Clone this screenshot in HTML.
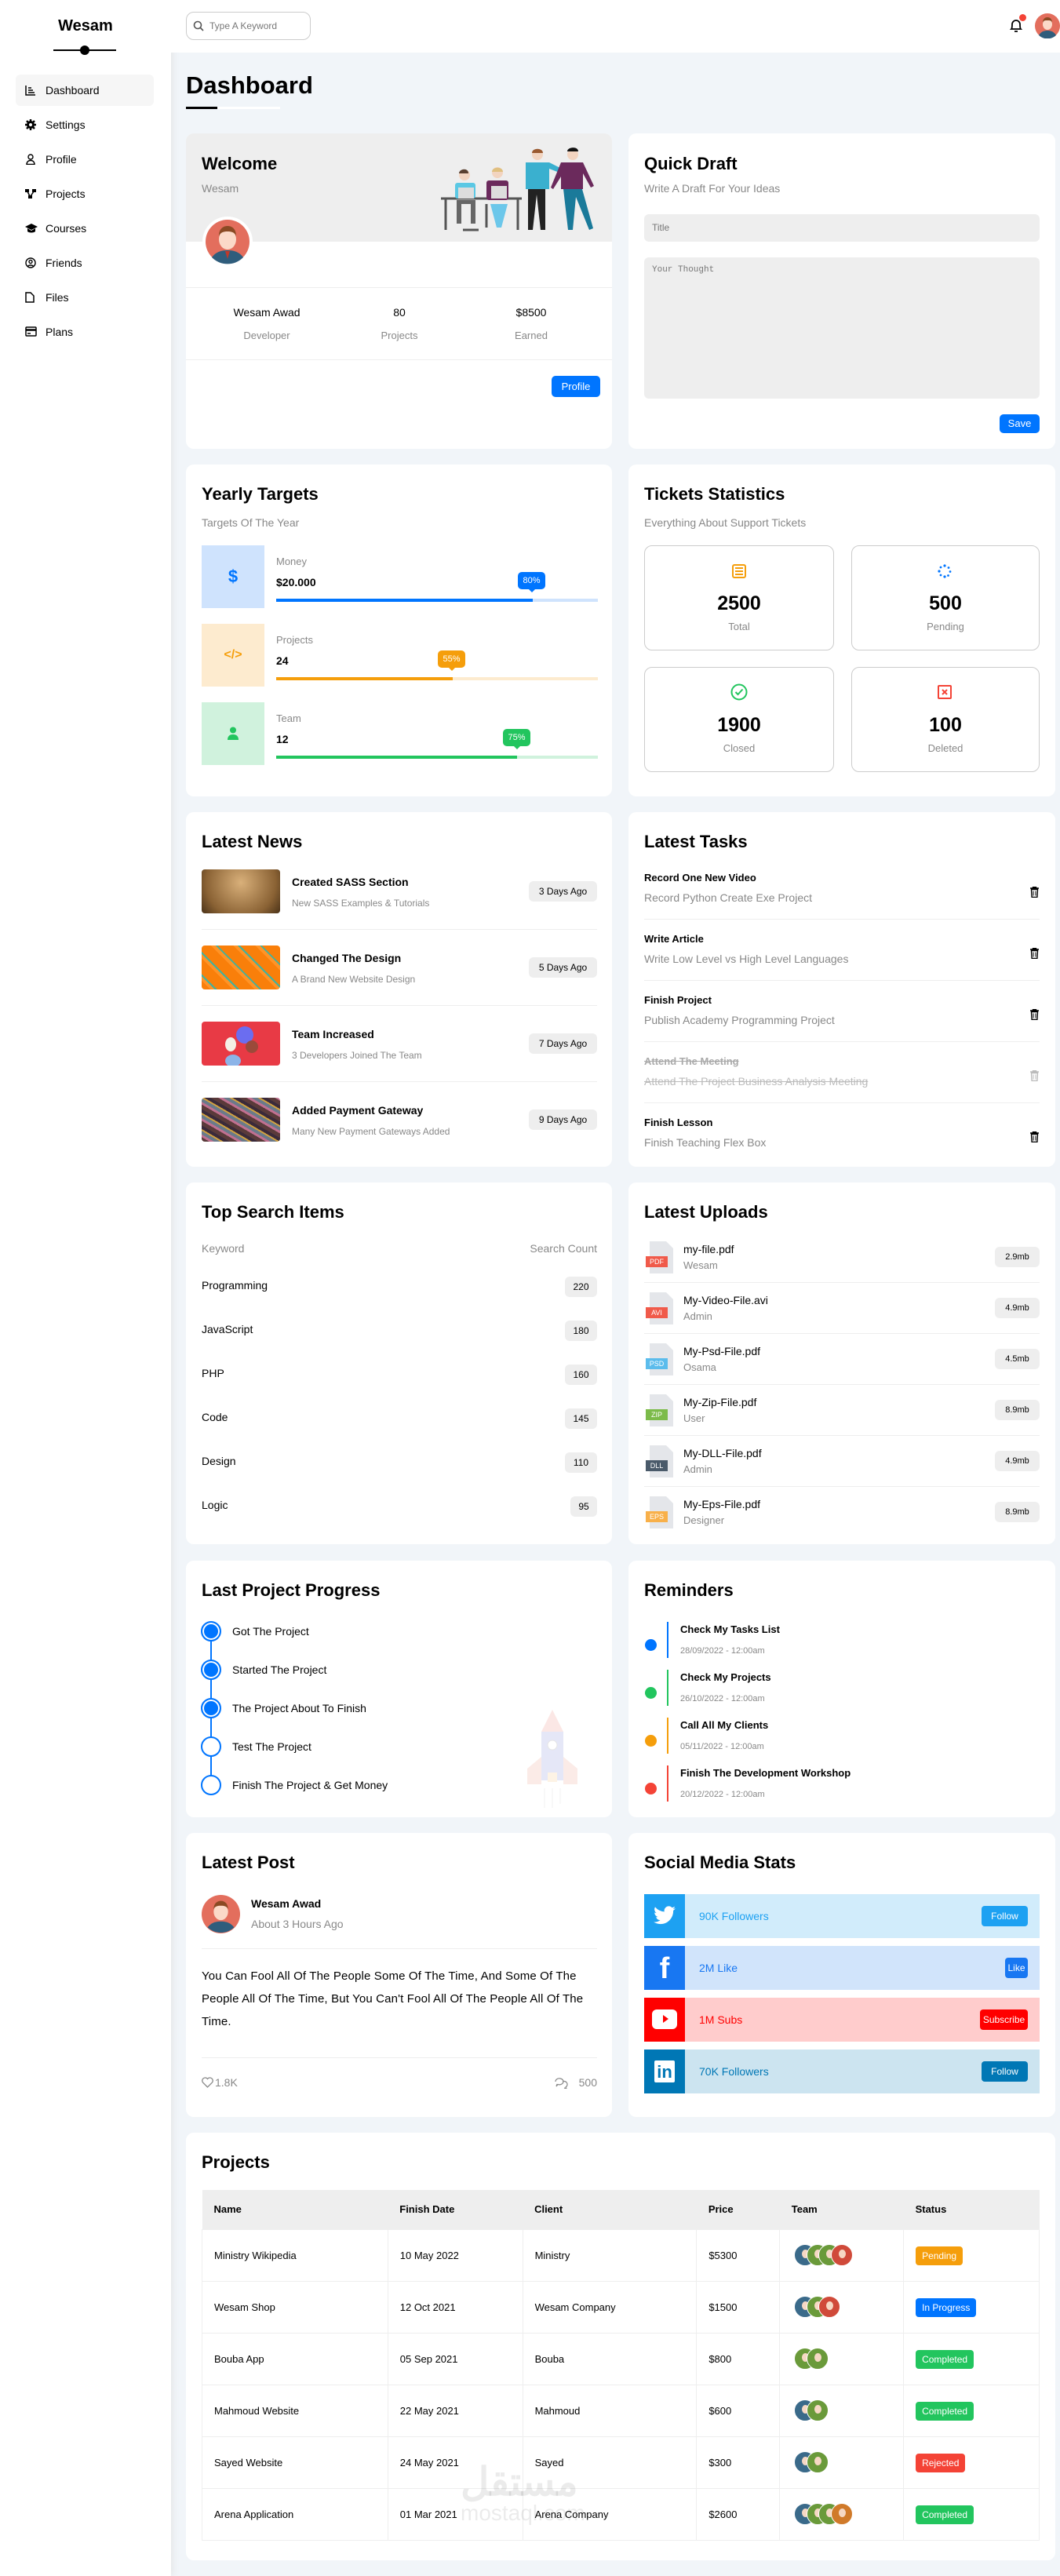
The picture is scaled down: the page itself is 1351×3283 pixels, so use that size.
<!DOCTYPE html>
<html><head><meta charset="utf-8">
<style>
*{box-sizing:border-box;margin:0;padding:0}
body{width:1351px;height:3283px;background:#f1f5f9;font-family:"Liberation Sans","Noto Sans CJK SC",sans-serif;color:#000;position:relative;overflow:hidden;font-size:14px}
.a{position:absolute}
.card{position:absolute;background:#fff;border-radius:10px}
.h{position:absolute;left:20px;top:24px;font-size:22px;font-weight:bold;line-height:28px;white-space:nowrap}
.sub{position:absolute;left:20px;top:64px;font-size:14px;color:#888;line-height:20px;white-space:nowrap}
.g{color:#888}
.t{white-space:nowrap;line-height:20px}
.badge{position:absolute;background:#eee;border-radius:6px;font-size:12px;text-align:center;line-height:26px;height:26px}
.nav{position:absolute;left:20px;width:176px;height:40px;border-radius:6px;font-size:14px;line-height:40px;padding-left:38px}
.nav svg{position:absolute;left:12px;top:13px}
.sep{position:absolute;height:1px;background:#eee}
td,th{border:1px solid #eee}
.av{display:inline-block;width:28px;height:28px;border-radius:50%;border:1px solid #fff;vertical-align:middle;margin-left:-12.5px;position:relative}
.av:first-child{margin-left:0}
.av::after{content:"";position:absolute;left:9px;top:6px;width:9px;height:11px;border-radius:50%;background:#f6d8c4}
.b{background:#3a6a8a}.gr{background:#6a9a3a}.r{background:#d04a3a}.o{background:#d07a2a}
</style></head><body>

<!-- sidebar -->
<div class="a" style="left:0;top:0;width:218px;height:3283px;background:#fff;box-shadow:0 0 10px #ddd"></div>
<div class="a t" style="left:0;width:218px;top:20px;text-align:center;font-weight:bold;font-size:20px;line-height:26px">Wesam</div>
<div class="a" style="left:68px;top:63px;width:80px;height:2px;background:#000"></div>
<div class="a" style="left:102px;top:58px;width:12px;height:12px;border-radius:50%;background:#000"></div>

<div class="nav" style="top:95px;background:#f6f6f6"><svg width="14" height="14" viewBox="0 0 14 14" fill="none" stroke="#000" stroke-width="1.5"><path d="M1 1v12h12M4 4h4M4 7h6M4 10h8"/></svg>Dashboard</div>
<div class="nav" style="top:139px"><svg width="14" height="14" viewBox="0 0 14 14"><circle cx="7" cy="7" r="5" fill="#000"/><path d="M7 0v14M0 7h14M2 2l10 10M12 2L2 12" stroke="#000" stroke-width="2.5"/><circle cx="7" cy="7" r="2" fill="#fff"/></svg>Settings</div>
<div class="nav" style="top:183px"><svg width="14" height="14" viewBox="0 0 14 14" fill="none" stroke="#000" stroke-width="1.4"><circle cx="7" cy="4" r="3"/><path d="M2 13.5c0-3 2-5 5-5s5 2 5 5z"/></svg>Profile</div>
<div class="nav" style="top:227px"><svg width="14" height="14" viewBox="0 0 14 14"><rect x="0" y="1" width="5" height="4" fill="#000"/><rect x="9" y="1" width="5" height="4" fill="#000"/><rect x="4" y="9" width="5" height="4" fill="#000"/><path d="M3 4l3 6M11 4l-4 6" stroke="#000" stroke-width="1.5"/></svg>Projects</div>
<div class="nav" style="top:271px"><svg width="16" height="14" viewBox="0 0 16 14"><path d="M8 1L0 5l8 4 8-4z" fill="#000"/><path d="M3 7v4c2 2 8 2 10 0V7L8 10z" fill="#000"/></svg>Courses</div>
<div class="nav" style="top:315px"><svg width="14" height="14" viewBox="0 0 14 14" fill="none" stroke="#000" stroke-width="1.4"><circle cx="7" cy="7" r="6"/><circle cx="7" cy="5.5" r="2"/><path d="M3.5 11.5c1-2 6-2 7 0"/></svg>Friends</div>
<div class="nav" style="top:359px"><svg width="12" height="14" viewBox="0 0 12 14" fill="none" stroke="#000" stroke-width="1.5"><path d="M1 1h6l4 4v8H1z"/></svg>Files</div>
<div class="nav" style="top:403px"><svg width="15" height="13" viewBox="0 0 15 13" fill="none" stroke="#000" stroke-width="1.5"><rect x="1" y="1" width="13" height="11" rx="1"/><path d="M1 4.5h13" stroke-width="2.5"/><path d="M3 9h4"/></svg>Plans</div>

<!-- header -->
<div class="a" style="left:218px;top:0;width:1133px;height:67px;background:#fff"></div>
<div class="a" style="left:237px;top:15px;width:159px;height:36px;border:1px solid #ccc;border-radius:10px"></div>
<svg class="a" style="left:246px;top:26px" width="14" height="14" viewBox="0 0 14 14" fill="none" stroke="#555" stroke-width="1.6"><circle cx="6" cy="6" r="4.5"/><path d="M9.5 9.5L13 13"/></svg>
<div class="a t" style="left:267px;top:23px;font-size:12px;color:#777">Type A Keyword</div>
<svg class="a" style="left:1286px;top:22px" width="18" height="20" viewBox="0 0 18 20" fill="none" stroke="#000" stroke-width="1.8"><path d="M3 15c1-1 1-3 1-6a5 5 0 0 1 10 0c0 3 0 5 1 6zM7 18h4"/></svg>
<div class="a" style="left:1299px;top:18px;width:9px;height:9px;border-radius:50%;background:#f44336"></div>
<svg class="a" style="left:1319px;top:17px" width="32" height="32" viewBox="0 0 32 32"><circle cx="16" cy="16" r="16" fill="#e36e5d"/><path d="M5 28c3-5 7-6 11-6s8 1 11 6a16 16 0 0 1-22 0z" fill="#2f5d7c"/><ellipse cx="16" cy="14" rx="6" ry="7" fill="#fbd9c8"/><path d="M10 12c0-5 3-7 6-7s6 2 6 7c-1-3-3-3-6-3s-5 0-6 3z" fill="#8b4a24"/></svg>

<!-- title -->
<div class="a t" style="left:237px;top:90px;font-size:31px;font-weight:bold;line-height:38px">Dashboard</div>
<div class="a" style="left:237px;top:136px;width:120px;height:3px;background:#fff"></div>
<div class="a" style="left:237px;top:136px;width:40px;height:3px;background:#000"></div>

<!-- Welcome -->
<div class="card" style="left:237px;top:170px;width:543px;height:402px;overflow:hidden">
 <div class="a" style="left:0;top:0;width:543px;height:138px;background:#eee"></div>
 <div class="h" style="top:25px">Welcome</div>
 <div class="sub" style="top:60px">Wesam</div>
 <svg class="a" style="left:303px;top:5px" width="240" height="135" viewBox="0 0 240 135">
  <path d="M22 78h103M28 78v40M120 78v40M50 118h20M80 85v30M95 85v30" stroke="#555" stroke-width="3" fill="none"/>
  <circle cx="52" cy="48" r="7" fill="#f2d4c0"/><path d="M45 46c0-6 12-8 12 0z" fill="#5a4030"/>
  <rect x="40" y="58" width="26" height="20" rx="3" fill="#5bc8e4"/><rect x="44" y="64" width="20" height="14" fill="#ddd"/>
  <path d="M42 80h24v30h-6v-25h-12v25h-6z" fill="#666"/>
  <circle cx="94" cy="45" r="7" fill="#f2d4c0"/><path d="M87 44c0-7 14-7 14 0z" fill="#e0c080"/>
  <rect x="80" y="55" width="28" height="25" rx="3" fill="#6b2a5c"/><rect x="86" y="62" width="20" height="16" fill="#ddd"/>
  <path d="M85 85h22l-8 30h-6z" fill="#6cc7ea"/>
  <circle cx="145" cy="22" r="7" fill="#f2d4c0"/><path d="M138 20c0-7 14-7 14 0z" fill="#9a5a30"/>
  <path d="M130 32h30l20 10-2 5-18-7v26h-30z" fill="#3ab0cf"/>
  <path d="M133 66h22v52h-6l-5-45-5 45h-6z" fill="#222"/>
  <circle cx="190" cy="22" r="7" fill="#f2d4c0"/><path d="M183 18c0-6 14-7 14 0z" fill="#111"/>
  <path d="M175 32h28l14 30-4 2-10-18v20h-28v-16l-10 16-3-2z" fill="#6b2a5c"/>
  <path d="M178 66h24l14 50-5 2-17-42-4 42h-6z" fill="#1a7a9a"/>
 </svg>
 <svg class="a" style="left:21px;top:106px" width="64" height="64" viewBox="0 0 64 64"><circle cx="32" cy="32" r="32" fill="#fff"/><circle cx="32" cy="32" r="28" fill="#e36e5d"/><path d="M12 52c5-7 12-9 20-9s15 2 20 9a28 28 0 0 1-40 0z" fill="#2f5d7c"/><path d="M29 44h6l-3 10z" fill="#c0392b"/><ellipse cx="32" cy="29" rx="11" ry="13" fill="#fbd9c8"/><path d="M21 25c0-9 5-13 11-13s11 4 11 13c-2-5-6-6-11-6s-9 1-11 6z" fill="#8b4a24"/></svg>
 <div class="sep" style="left:0;top:196px;width:543px"></div>
 <div class="a t" style="left:33px;width:140px;top:218px;text-align:center">Wesam Awad</div>
 <div class="a t g" style="left:33px;width:140px;top:248px;text-align:center;font-size:13px">Developer</div>
 <div class="a t" style="left:202px;width:140px;top:218px;text-align:center">80</div>
 <div class="a t g" style="left:202px;width:140px;top:248px;text-align:center;font-size:13px">Projects</div>
 <div class="a t" style="left:370px;width:140px;top:218px;text-align:center">$8500</div>
 <div class="a t g" style="left:370px;width:140px;top:248px;text-align:center;font-size:13px">Earned</div>
 <div class="sep" style="left:0;top:288px;width:543px"></div>
 <div class="a" style="left:466px;top:309px;width:62px;height:27px;background:#0075ff;border-radius:5px;color:#fff;font-size:13px;text-align:center;line-height:27px">Profile</div>
</div>

<!-- Quick Draft -->
<div class="card" style="left:801px;top:170px;width:544px;height:402px">
 <div class="h" style="top:25px">Quick Draft</div>
 <div class="sub" style="top:60px">Write A Draft For Your Ideas</div>
 <div class="a" style="left:20px;top:103px;width:504px;height:35px;background:#eee;border-radius:6px;font-size:12px;color:#777;padding:10px 10px;line-height:15px">Title</div>
 <div class="a" style="left:20px;top:158px;width:504px;height:180px;background:#eee;border-radius:6px;font-size:11px;color:#777;padding:10px;font-family:'Liberation Mono',monospace">Your Thought</div>
 <div class="a" style="left:473px;top:358px;width:51px;height:24px;background:#0075ff;border-radius:5px;color:#fff;font-size:13px;text-align:center;line-height:24px">Save</div>
</div>

<!-- Yearly Targets -->
<div class="card" style="left:237px;top:592px;width:543px;height:423px">
 <div class="h">Yearly Targets</div>
 <div class="sub">Targets Of The Year</div>
 <div class="a" style="left:20px;top:103px;width:80px;height:80px;background:#cfe3fd"></div>
 <div class="a" style="left:20px;top:130px;width:80px;text-align:center;color:#0075ff;font-size:22px;font-weight:bold;line-height:26px">$</div>
 <div class="a t g" style="left:115px;top:114px;font-size:13px">Money</div>
 <div class="a t" style="left:115px;top:140px;font-weight:bold">$20.000</div>
 <div class="a" style="left:115px;top:171px;width:410px;height:4px;background:#cfe3fd"></div>
 <div class="a" style="left:115px;top:171px;width:327px;height:4px;background:#0075ff"></div>
 <div class="a" style="left:423px;top:137px;width:35px;height:22px;background:#0075ff;border-radius:5px;color:#fff;font-size:11px;text-align:center;line-height:22px">80%</div>
 <div class="a" style="left:436px;top:158px;border:5px solid transparent;border-top-color:#0075ff"></div>
 <div class="a" style="left:20px;top:203px;width:80px;height:80px;background:#fdebcf"></div>
 <div class="a" style="left:20px;top:230px;width:80px;text-align:center;color:#f59e0b;font-size:16px;font-weight:bold;line-height:26px">&lt;/&gt;</div>
 <div class="a t g" style="left:115px;top:214px;font-size:13px">Projects</div>
 <div class="a t" style="left:115px;top:240px;font-weight:bold">24</div>
 <div class="a" style="left:115px;top:271px;width:410px;height:4px;background:#fdebcf"></div>
 <div class="a" style="left:115px;top:271px;width:225px;height:4px;background:#f59e0b"></div>
 <div class="a" style="left:321px;top:237px;width:35px;height:22px;background:#f59e0b;border-radius:5px;color:#fff;font-size:11px;text-align:center;line-height:22px">55%</div>
 <div class="a" style="left:334px;top:258px;border:5px solid transparent;border-top-color:#f59e0b"></div>
 <div class="a" style="left:20px;top:303px;width:80px;height:80px;background:#d0f2dd"></div>
 <svg class="a" style="left:52px;top:334px" width="16" height="18" viewBox="0 0 16 18"><circle cx="8" cy="4.5" r="4" fill="#22c55e"/><path d="M1 17c0-5 3-7 7-7s7 2 7 7z" fill="#22c55e"/></svg>
 <div class="a t g" style="left:115px;top:314px;font-size:13px">Team</div>
 <div class="a t" style="left:115px;top:340px;font-weight:bold">12</div>
 <div class="a" style="left:115px;top:371px;width:410px;height:4px;background:#d0f2dd"></div>
 <div class="a" style="left:115px;top:371px;width:307px;height:4px;background:#22c55e"></div>
 <div class="a" style="left:404px;top:337px;width:35px;height:22px;background:#22c55e;border-radius:5px;color:#fff;font-size:11px;text-align:center;line-height:22px">75%</div>
 <div class="a" style="left:417px;top:358px;border:5px solid transparent;border-top-color:#22c55e"></div>
</div>

<!-- Tickets -->
<div class="card" style="left:801px;top:592px;width:544px;height:423px">
 <div class="h">Tickets Statistics</div>
 <div class="sub">Everything About Support Tickets</div>
 <div class="a" style="left:20px;top:103px;width:242px;height:134px;border:1px solid #ccc;border-radius:10px"></div>
 <div class="a" style="left:284px;top:103px;width:240px;height:134px;border:1px solid #ccc;border-radius:10px"></div>
 <div class="a" style="left:20px;top:258px;width:242px;height:134px;border:1px solid #ccc;border-radius:10px"></div>
 <div class="a" style="left:284px;top:258px;width:240px;height:134px;border:1px solid #ccc;border-radius:10px"></div>
 <svg class="a" style="left:132px;top:127px" width="18" height="18" viewBox="0 0 18 18" fill="none" stroke="#f59e0b" stroke-width="2"><rect x="1" y="1" width="16" height="16" rx="2"/><path d="M4 5h10M4 9h10M4 13h10"/></svg>
 <svg class="a" style="left:394px;top:127px" width="18" height="18" viewBox="0 0 18 18" fill="#0075ff"><circle cx="9" cy="2" r="1.6"/><circle cx="14" cy="4.5" r="1.4"/><circle cx="16" cy="9.5" r="1.4"/><circle cx="13.5" cy="14.5" r="1.4"/><circle cx="9" cy="16" r="1.6"/><circle cx="4" cy="14" r="1.4"/><circle cx="2" cy="9" r="1.6"/><circle cx="4" cy="4" r="1.4"/></svg>
 <div class="a t" style="left:20px;width:242px;top:162px;text-align:center;font-size:25px;font-weight:bold;line-height:30px">2500</div>
 <div class="a t g" style="left:20px;width:242px;top:197px;text-align:center;font-size:13px">Total</div>
 <div class="a t" style="left:284px;width:240px;top:162px;text-align:center;font-size:25px;font-weight:bold;line-height:30px">500</div>
 <div class="a t g" style="left:284px;width:240px;top:197px;text-align:center;font-size:13px">Pending</div>
 <svg class="a" style="left:130px;top:279px" width="22" height="22" viewBox="0 0 22 22" fill="none" stroke="#22c55e" stroke-width="2"><circle cx="11" cy="11" r="9.5"/><path d="M6.5 11l3 3 6-6.5"/></svg>
 <svg class="a" style="left:394px;top:281px" width="18" height="18" viewBox="0 0 18 18" fill="none" stroke="#f44336" stroke-width="2"><rect x="1" y="1" width="16" height="16" rx="1"/><path d="M6 6l6 6M12 6l-6 6"/></svg>
 <div class="a t" style="left:20px;width:242px;top:317px;text-align:center;font-size:25px;font-weight:bold;line-height:30px">1900</div>
 <div class="a t g" style="left:20px;width:242px;top:352px;text-align:center;font-size:13px">Closed</div>
 <div class="a t" style="left:284px;width:240px;top:317px;text-align:center;font-size:25px;font-weight:bold;line-height:30px">100</div>
 <div class="a t g" style="left:284px;width:240px;top:352px;text-align:center;font-size:13px">Deleted</div>
</div>

<!-- Latest News -->
<div class="card" style="left:237px;top:1035px;width:543px;height:452px">
 <div class="h" style="top:24px">Latest News</div>
 <div class="a" style="left:20px;top:73px;width:100px;height:56px;border-radius:4px;background:radial-gradient(circle at 50% 30%,#d9b07a,#8a6234 70%,#4a3218)"></div>
 <div class="a t" style="left:135px;top:79px;font-weight:bold">Created SASS Section</div>
 <div class="a t g" style="left:135px;top:106px;font-size:12px">New SASS Examples &amp; Tutorials</div>
 <div class="badge" style="left:437px;top:88px;width:87px">3 Days Ago</div>
 <div class="sep" style="left:20px;top:149px;width:504px"></div>
 <div class="a" style="left:20px;top:170px;width:100px;height:56px;border-radius:4px;background:repeating-linear-gradient(45deg,#f97f0a 0 8px,#ff9326 8px 12px,#3fb2a0 12px 14px,#f97f0a 14px 20px)"></div>
 <div class="a t" style="left:135px;top:176px;font-weight:bold">Changed The Design</div>
 <div class="a t g" style="left:135px;top:203px;font-size:12px">A Brand New Website Design</div>
 <div class="badge" style="left:437px;top:185px;width:87px">5 Days Ago</div>
 <div class="sep" style="left:20px;top:246px;width:504px"></div>
 <div class="a" style="left:20px;top:267px;width:100px;height:56px;border-radius:4px;background:#e83a45;overflow:hidden"><div class="a" style="left:44px;top:6px;width:22px;height:22px;border-radius:50%;background:#6b6df0"></div><div class="a" style="left:30px;top:20px;width:14px;height:18px;border-radius:50%;background:#f4efe6"></div><div class="a" style="left:56px;top:24px;width:16px;height:16px;border-radius:50%;background:#9b4a3a"></div><div class="a" style="left:30px;top:42px;width:20px;height:16px;border-radius:50%;background:#8cb4e8"></div></div>
 <div class="a t" style="left:135px;top:273px;font-weight:bold">Team Increased</div>
 <div class="a t g" style="left:135px;top:300px;font-size:12px">3 Developers Joined The Team</div>
 <div class="badge" style="left:437px;top:282px;width:87px">7 Days Ago</div>
 <div class="sep" style="left:20px;top:343px;width:504px"></div>
 <div class="a" style="left:20px;top:364px;width:100px;height:56px;border-radius:4px;background:repeating-linear-gradient(30deg,#5a3a3a 0 5px,#c07090 5px 8px,#6a7a8a 8px 12px,#d0a040 12px 14px,#3a2a3a 14px 18px)"></div>
 <div class="a t" style="left:135px;top:370px;font-weight:bold">Added Payment Gateway</div>
 <div class="a t g" style="left:135px;top:397px;font-size:12px">Many New Payment Gateways Added</div>
 <div class="badge" style="left:437px;top:379px;width:87px">9 Days Ago</div>
</div>

<!-- Latest Tasks -->
<div class="card" style="left:801px;top:1035px;width:544px;height:452px">
 <div class="h" style="top:24px">Latest Tasks</div>
 <div class="a t" style="left:20px;top:74px;font-size:13px;font-weight:bold">Record One New Video</div>
 <div class="a t g" style="left:20px;top:99px">Record Python Create Exe Project</div>
 <div class="sep" style="left:20px;top:136px;width:504px"></div>
 <div class="a t" style="left:20px;top:152px;font-size:13px;font-weight:bold">Write Article</div>
 <div class="a t g" style="left:20px;top:177px">Write Low Level vs High Level Languages</div>
 <div class="sep" style="left:20px;top:214px;width:504px"></div>
 <div class="a t" style="left:20px;top:230px;font-size:13px;font-weight:bold">Finish Project</div>
 <div class="a t g" style="left:20px;top:255px">Publish Academy Programming Project</div>
 <div class="sep" style="left:20px;top:292px;width:504px"></div>
 <div class="a t" style="left:20px;top:308px;font-size:13px;font-weight:bold;color:#aaa;text-decoration:line-through">Attend The Meeting</div>
 <div class="a t" style="left:20px;top:333px;color:#bbb;text-decoration:line-through">Attend The Project Business Analysis Meeting</div>
 <div class="sep" style="left:20px;top:370px;width:504px"></div>
 <div class="a t" style="left:20px;top:386px;font-size:13px;font-weight:bold">Finish Lesson</div>
 <div class="a t g" style="left:20px;top:411px">Finish Teaching Flex Box</div>
 <svg class="a" style="left:512px;top:95px" width="11" height="14" viewBox="0 0 11 14"><path d="M0 2h11M3.5 2V0.5h4V2M1.5 3.5h8l-0.6 10h-6.8z" fill="none" stroke="#000" stroke-width="1.4"/><path d="M4 5.5v6M7 5.5v6" stroke="#000"/></svg>
 <svg class="a" style="left:512px;top:173px" width="11" height="14" viewBox="0 0 11 14"><path d="M0 2h11M3.5 2V0.5h4V2M1.5 3.5h8l-0.6 10h-6.8z" fill="none" stroke="#000" stroke-width="1.4"/><path d="M4 5.5v6M7 5.5v6" stroke="#000"/></svg>
 <svg class="a" style="left:512px;top:251px" width="11" height="14" viewBox="0 0 11 14"><path d="M0 2h11M3.5 2V0.5h4V2M1.5 3.5h8l-0.6 10h-6.8z" fill="none" stroke="#000" stroke-width="1.4"/><path d="M4 5.5v6M7 5.5v6" stroke="#000"/></svg>
 <svg class="a" style="left:512px;top:329px" width="11" height="14" viewBox="0 0 11 14"><path d="M0 2h11M3.5 2V0.5h4V2M1.5 3.5h8l-0.6 10h-6.8z" fill="none" stroke="#bbb" stroke-width="1.4"/><path d="M4 5.5v6M7 5.5v6" stroke="#bbb"/></svg>
 <svg class="a" style="left:512px;top:407px" width="11" height="14" viewBox="0 0 11 14"><path d="M0 2h11M3.5 2V0.5h4V2M1.5 3.5h8l-0.6 10h-6.8z" fill="none" stroke="#000" stroke-width="1.4"/><path d="M4 5.5v6M7 5.5v6" stroke="#000"/></svg>
</div>

<!-- Top Search -->
<div class="card" style="left:237px;top:1507px;width:543px;height:461px">
 <div class="h" style="top:24px">Top Search Items</div>
 <div class="a t g" style="left:20px;top:74px">Keyword</div>
 <div class="a t g" style="right:19px;top:74px">Search Count</div>
 <div class="a t" style="left:20px;top:121px">Programming</div><div class="badge" style="left:483px;top:120px;width:41px">220</div>
 <div class="a t" style="left:20px;top:177px">JavaScript</div><div class="badge" style="left:483px;top:176px;width:41px">180</div>
 <div class="a t" style="left:20px;top:233px">PHP</div><div class="badge" style="left:483px;top:232px;width:41px">160</div>
 <div class="a t" style="left:20px;top:289px">Code</div><div class="badge" style="left:483px;top:288px;width:41px">145</div>
 <div class="a t" style="left:20px;top:345px">Design</div><div class="badge" style="left:483px;top:344px;width:41px">110</div>
 <div class="a t" style="left:20px;top:401px">Logic</div><div class="badge" style="left:490px;top:400px;width:34px">95</div>
</div>

<!-- Latest Uploads -->
<div class="card" style="left:801px;top:1507px;width:544px;height:461px">
 <div class="h" style="top:24px">Latest Uploads</div>
 <div class="a" style="left:0;top:75px;width:544px">
  <div class="a" style="left:27px;top:0;width:30px;height:41px;background:#e4e6ea;clip-path:polygon(0 0,70% 0,100% 22%,100% 100%,0 100%)"></div><div class="a" style="left:22px;top:19px;width:28px;height:14px;background:#f05a4a;color:#fff;font-size:9px;text-align:center;line-height:14px">PDF</div>
  <div class="a t" style="left:70px;top:0">my-file.pdf</div><div class="a t g" style="left:70px;top:21px;font-size:13px">Wesam</div>
  <div class="badge" style="left:467px;top:7px;width:57px;font-size:11px">2.9mb</div>
  <div class="sep" style="left:20px;top:52px;width:504px"></div>
 </div>
 <div class="a" style="left:0;top:140px;width:544px">
  <div class="a" style="left:27px;top:0;width:30px;height:41px;background:#e4e6ea;clip-path:polygon(0 0,70% 0,100% 22%,100% 100%,0 100%)"></div><div class="a" style="left:22px;top:19px;width:28px;height:14px;background:#f05a4a;color:#fff;font-size:9px;text-align:center;line-height:14px">AVI</div>
  <div class="a t" style="left:70px;top:0">My-Video-File.avi</div><div class="a t g" style="left:70px;top:21px;font-size:13px">Admin</div>
  <div class="badge" style="left:467px;top:7px;width:57px;font-size:11px">4.9mb</div>
  <div class="sep" style="left:20px;top:52px;width:504px"></div>
 </div>
 <div class="a" style="left:0;top:205px;width:544px">
  <div class="a" style="left:27px;top:0;width:30px;height:41px;background:#e4e6ea;clip-path:polygon(0 0,70% 0,100% 22%,100% 100%,0 100%)"></div><div class="a" style="left:22px;top:19px;width:28px;height:14px;background:#5bbcec;color:#fff;font-size:9px;text-align:center;line-height:14px">PSD</div>
  <div class="a t" style="left:70px;top:0">My-Psd-File.pdf</div><div class="a t g" style="left:70px;top:21px;font-size:13px">Osama</div>
  <div class="badge" style="left:467px;top:7px;width:57px;font-size:11px">4.5mb</div>
  <div class="sep" style="left:20px;top:52px;width:504px"></div>
 </div>
 <div class="a" style="left:0;top:270px;width:544px">
  <div class="a" style="left:27px;top:0;width:30px;height:41px;background:#e4e6ea;clip-path:polygon(0 0,70% 0,100% 22%,100% 100%,0 100%)"></div><div class="a" style="left:22px;top:19px;width:28px;height:14px;background:#7cbb4a;color:#fff;font-size:9px;text-align:center;line-height:14px">ZIP</div>
  <div class="a t" style="left:70px;top:0">My-Zip-File.pdf</div><div class="a t g" style="left:70px;top:21px;font-size:13px">User</div>
  <div class="badge" style="left:467px;top:7px;width:57px;font-size:11px">8.9mb</div>
  <div class="sep" style="left:20px;top:52px;width:504px"></div>
 </div>
 <div class="a" style="left:0;top:335px;width:544px">
  <div class="a" style="left:27px;top:0;width:30px;height:41px;background:#e4e6ea;clip-path:polygon(0 0,70% 0,100% 22%,100% 100%,0 100%)"></div><div class="a" style="left:22px;top:19px;width:28px;height:14px;background:#4a5a6a;color:#fff;font-size:9px;text-align:center;line-height:14px">DLL</div>
  <div class="a t" style="left:70px;top:0">My-DLL-File.pdf</div><div class="a t g" style="left:70px;top:21px;font-size:13px">Admin</div>
  <div class="badge" style="left:467px;top:7px;width:57px;font-size:11px">4.9mb</div>
  <div class="sep" style="left:20px;top:52px;width:504px"></div>
 </div>
 <div class="a" style="left:0;top:400px;width:544px">
  <div class="a" style="left:27px;top:0;width:30px;height:41px;background:#e4e6ea;clip-path:polygon(0 0,70% 0,100% 22%,100% 100%,0 100%)"></div><div class="a" style="left:22px;top:19px;width:28px;height:14px;background:#f8b04a;color:#fff;font-size:9px;text-align:center;line-height:14px">EPS</div>
  <div class="a t" style="left:70px;top:0">My-Eps-File.pdf</div><div class="a t g" style="left:70px;top:21px;font-size:13px">Designer</div>
  <div class="badge" style="left:467px;top:7px;width:57px;font-size:11px">8.9mb</div>
 </div>
</div>

<!-- Last Project Progress -->
<div class="card" style="left:237px;top:1989px;width:543px;height:327px;overflow:hidden">
 <div class="h" style="top:24px">Last Project Progress</div>
 <div class="a" style="left:31px;top:90px;width:2px;height:196px;background:#0075ff"></div>
 <div class="a" style="left:19px;top:77px;width:26px;height:26px;border-radius:50%;border:2px solid #0075ff;background:#0075ff;box-shadow:inset 0 0 0 2px #fff"></div>
 <div class="a" style="left:19px;top:126px;width:26px;height:26px;border-radius:50%;border:2px solid #0075ff;background:#0075ff;box-shadow:inset 0 0 0 2px #fff"></div>
 <div class="a" style="left:19px;top:175px;width:26px;height:26px;border-radius:50%;border:2px solid #0075ff;background:#0075ff;box-shadow:inset 0 0 0 2px #fff"></div>
 <div class="a" style="left:19px;top:224px;width:26px;height:26px;border-radius:50%;border:2px solid #0075ff;background:#fff"></div>
 <div class="a" style="left:19px;top:273px;width:26px;height:26px;border-radius:50%;border:2px solid #0075ff;background:#fff"></div>
 <div class="a t" style="left:59px;top:80px">Got The Project</div>
 <div class="a t" style="left:59px;top:129px">Started The Project</div>
 <div class="a t" style="left:59px;top:178px">The Project About To Finish</div>
 <div class="a t" style="left:59px;top:227px">Test The Project</div>
 <div class="a t" style="left:59px;top:276px">Finish The Project &amp; Get Money</div>
 <svg class="a" style="left:425px;top:190px;opacity:.12" width="85" height="125" viewBox="0 0 85 125"><path d="M42 0l14 28H28z" fill="#e04030"/><rect x="28" y="28" width="28" height="62" fill="#3040c0"/><circle cx="42" cy="45" r="6" fill="#fff" stroke="#333"/><path d="M28 60L10 75v20h18zM56 60l18 15v20H56z" fill="#e06040"/><rect x="36" y="80" width="12" height="12" fill="#f0a030"/><path d="M32 100v25M42 100v25M52 100v20" stroke="#999"/></svg>
</div>

<!-- Reminders -->
<div class="card" style="left:801px;top:1989px;width:544px;height:327px">
 <div class="h" style="top:24px">Reminders</div>
 <div class="a" style="left:21px;top:100px;width:15px;height:15px;border-radius:50%;background:#0075ff"></div>
 <div class="a" style="left:49px;top:78px;width:2px;height:46px;background:#0075ff"></div>
 <div class="a t" style="left:66px;top:78px;font-size:13px;font-weight:bold">Check My Tasks List</div>
 <div class="a t g" style="left:66px;top:105px;font-size:11px">28/09/2022 - 12:00am</div>
 <div class="a" style="left:21px;top:161px;width:15px;height:15px;border-radius:50%;background:#22c55e"></div>
 <div class="a" style="left:49px;top:139px;width:2px;height:46px;background:#22c55e"></div>
 <div class="a t" style="left:66px;top:139px;font-size:13px;font-weight:bold">Check My Projects</div>
 <div class="a t g" style="left:66px;top:166px;font-size:11px">26/10/2022 - 12:00am</div>
 <div class="a" style="left:21px;top:222px;width:15px;height:15px;border-radius:50%;background:#f59e0b"></div>
 <div class="a" style="left:49px;top:200px;width:2px;height:46px;background:#f59e0b"></div>
 <div class="a t" style="left:66px;top:200px;font-size:13px;font-weight:bold">Call All My Clients</div>
 <div class="a t g" style="left:66px;top:227px;font-size:11px">05/11/2022 - 12:00am</div>
 <div class="a" style="left:21px;top:283px;width:15px;height:15px;border-radius:50%;background:#f44336"></div>
 <div class="a" style="left:49px;top:261px;width:2px;height:46px;background:#f44336"></div>
 <div class="a t" style="left:66px;top:261px;font-size:13px;font-weight:bold">Finish The Development Workshop</div>
 <div class="a t g" style="left:66px;top:288px;font-size:11px">20/12/2022 - 12:00am</div>
</div>

<!-- Latest Post -->
<div class="card" style="left:237px;top:2336px;width:543px;height:362px">
 <div class="h" style="top:24px">Latest Post</div>
 <svg class="a" style="left:20px;top:79px" width="49" height="49" viewBox="0 0 64 64"><circle cx="32" cy="32" r="32" fill="#e36e5d"/><path d="M10 54c5-7 12-10 22-10s17 3 22 10a32 32 0 0 1-44 0z" fill="#2f5d7c"/><ellipse cx="32" cy="28" rx="12" ry="14" fill="#fbd9c8"/><path d="M20 24c0-9 5-14 12-14s12 5 12 14c-2-5-6-6-12-6s-10 1-12 6z" fill="#8b4a24"/></svg>
 <div class="a t" style="left:83px;top:80px;font-weight:bold">Wesam Awad</div>
 <div class="a t g" style="left:83px;top:106px">About 3 Hours Ago</div>
 <div class="sep" style="left:20px;top:147px;width:504px"></div>
 <div class="a" style="left:20px;top:168px;width:505px;line-height:29px;font-size:15px;letter-spacing:0.15px">You Can Fool All Of The People Some Of The Time, And Some Of The People All Of The Time, But You Can't Fool All Of The People All Of The Time.</div>
 <div class="sep" style="left:20px;top:286px;width:504px"></div>
 <svg class="a" style="left:20px;top:311px" width="15" height="14" viewBox="0 0 15 14" fill="none" stroke="#888" stroke-width="1.3"><path d="M7.5 13L1.5 7A3.3 3.3 0 0 1 7.5 2.5 3.3 3.3 0 0 1 13.5 7z"/></svg>
 <div class="a t g" style="left:37px;top:308px">1.8K</div>
 <svg class="a" style="left:470px;top:311px" width="18" height="15" viewBox="0 0 18 15" fill="none" stroke="#888" stroke-width="1.2"><path d="M1 6a5 4 0 1 1 3 3.5L2 12l1-3M10 6a4 4 0 0 1 4 7l1 2-3-1"/></svg>
 <div class="a t g" style="right:19px;top:308px">500</div>
</div>

<!-- Social -->
<div class="card" style="left:801px;top:2336px;width:544px;height:362px">
 <div class="h" style="top:24px">Social Media Stats</div>
 <div class="a" style="left:20px;top:78px;width:504px;height:56px;background:#d1ecfb"></div>
 <div class="a" style="left:20px;top:78px;width:52px;height:56px;background:#1da1f2"></div>
 <svg class="a" style="left:32px;top:92px" width="28" height="26" viewBox="0 0 24 20"><path d="M24 2.3a10 10 0 0 1-2.8.8A5 5 0 0 0 23.3.4a10 10 0 0 1-3.1 1.2A4.9 4.9 0 0 0 11.8 6 14 14 0 0 1 1.7.9a4.9 4.9 0 0 0 1.5 6.6A4.9 4.9 0 0 1 1 6.9a4.9 4.9 0 0 0 3.9 4.8 4.9 4.9 0 0 1-2.2.1 4.9 4.9 0 0 0 4.6 3.4A9.9 9.9 0 0 1 0 17.3 14 14 0 0 0 7.5 19.5c9 0 14-7.5 14-14v-.6A10 10 0 0 0 24 2.3z" fill="#fff"/></svg>
 <div class="a t" style="left:90px;top:96px;color:#1da1f2">90K Followers</div>
 <div class="a" style="left:450px;top:93px;width:59px;height:26px;background:#1da1f2;border-radius:4px;color:#fff;font-size:12px;text-align:center;line-height:26px">Follow</div>

 <div class="a" style="left:20px;top:144px;width:504px;height:56px;background:#d1e4fb"></div>
 <div class="a" style="left:20px;top:144px;width:52px;height:56px;background:#1877f2"></div>
 <div class="a" style="left:20px;top:148px;width:52px;text-align:center;color:#fff;font-weight:bold;font-size:38px;line-height:50px">f</div>
 <div class="a t" style="left:90px;top:162px;color:#1877f2">2M Like</div>
 <div class="a" style="left:480px;top:159px;width:29px;height:26px;background:#1877f2;border-radius:4px;color:#fff;font-size:12px;text-align:center;line-height:26px">Like</div>

 <div class="a" style="left:20px;top:210px;width:504px;height:56px;background:#ffcccc"></div>
 <div class="a" style="left:20px;top:210px;width:52px;height:56px;background:#ff0000"></div>
 <div class="a" style="left:30px;top:225px;width:32px;height:25px;background:#fff;border-radius:6px"></div>
 <div class="a" style="left:44px;top:232px;border-left:7px solid #f00;border-top:5px solid transparent;border-bottom:5px solid transparent"></div>
 <div class="a t" style="left:90px;top:228px;color:#f00">1M Subs</div>
 <div class="a" style="left:448px;top:225px;width:61px;height:26px;background:#f00;border-radius:4px;color:#fff;font-size:12px;text-align:center;line-height:26px">Subscribe</div>

 <div class="a" style="left:20px;top:276px;width:504px;height:56px;background:#cce4f0"></div>
 <div class="a" style="left:20px;top:276px;width:52px;height:56px;background:#0077b5"></div>
 <div class="a" style="left:33px;top:290px;width:26px;height:28px;background:#fff;color:#0077b5;font-weight:bold;font-size:22px;text-align:center;line-height:30px;border-radius:2px">in</div>
 <div class="a t" style="left:90px;top:294px;color:#0077b5">70K Followers</div>
 <div class="a" style="left:450px;top:291px;width:59px;height:26px;background:#0077b5;border-radius:4px;color:#fff;font-size:12px;text-align:center;line-height:26px">Follow</div>
</div>

<!-- Projects -->
<div class="card" style="left:237px;top:2718px;width:1108px;height:545px">
 <div class="h" style="top:24px">Projects</div>
 <table class="a" style="left:20px;top:73px;width:1068px;border-collapse:collapse;font-size:13px">
  <colgroup><col style="width:237px"><col style="width:172px"><col style="width:222px"><col style="width:106px"><col style="width:158px"><col style="width:173px"></colgroup>
  <tr style="height:50px;background:#eee;font-weight:bold;text-align:left"><th style="padding-left:15px;border:none">Name</th><th style="padding-left:15px;border:none">Finish Date</th><th style="padding-left:15px;border:none">Client</th><th style="padding-left:15px;border:none">Price</th><th style="padding-left:15px;border:none">Team</th><th style="padding-left:15px;border:none">Status</th></tr>
  <tr style="height:66px"><td style="padding-left:15px">Ministry Wikipedia</td><td style="padding-left:15px">10 May 2022</td><td style="padding-left:15px">Ministry</td><td style="padding-left:15px">$5300</td><td style="padding-left:18px"><span class="av b"></span><span class="av gr"></span><span class="av gr"></span><span class="av r"></span></td><td style="padding-left:15px"><span style="background:#f59e0b;color:#fff;padding:5px 8px;border-radius:4px;font-size:12px">Pending</span></td></tr>
  <tr style="height:66px"><td style="padding-left:15px">Wesam Shop</td><td style="padding-left:15px">12 Oct 2021</td><td style="padding-left:15px">Wesam Company</td><td style="padding-left:15px">$1500</td><td style="padding-left:18px"><span class="av b"></span><span class="av gr"></span><span class="av r"></span></td><td style="padding-left:15px"><span style="background:#0075ff;color:#fff;padding:5px 8px;border-radius:4px;font-size:12px">In Progress</span></td></tr>
  <tr style="height:66px"><td style="padding-left:15px">Bouba App</td><td style="padding-left:15px">05 Sep 2021</td><td style="padding-left:15px">Bouba</td><td style="padding-left:15px">$800</td><td style="padding-left:18px"><span class="av gr"></span><span class="av gr"></span></td><td style="padding-left:15px"><span style="background:#22c55e;color:#fff;padding:5px 8px;border-radius:4px;font-size:12px">Completed</span></td></tr>
  <tr style="height:66px"><td style="padding-left:15px">Mahmoud Website</td><td style="padding-left:15px">22 May 2021</td><td style="padding-left:15px">Mahmoud</td><td style="padding-left:15px">$600</td><td style="padding-left:18px"><span class="av b"></span><span class="av gr"></span></td><td style="padding-left:15px"><span style="background:#22c55e;color:#fff;padding:5px 8px;border-radius:4px;font-size:12px">Completed</span></td></tr>
  <tr style="height:66px"><td style="padding-left:15px">Sayed Website</td><td style="padding-left:15px">24 May 2021</td><td style="padding-left:15px">Sayed</td><td style="padding-left:15px">$300</td><td style="padding-left:18px"><span class="av b"></span><span class="av gr"></span></td><td style="padding-left:15px"><span style="background:#f44336;color:#fff;padding:5px 8px;border-radius:4px;font-size:12px">Rejected</span></td></tr>
  <tr style="height:66px"><td style="padding-left:15px">Arena Application</td><td style="padding-left:15px">01 Mar 2021</td><td style="padding-left:15px">Arena Company</td><td style="padding-left:15px">$2600</td><td style="padding-left:18px"><span class="av b"></span><span class="av gr"></span><span class="av gr"></span><span class="av o"></span></td><td style="padding-left:15px"><span style="background:#22c55e;color:#fff;padding:5px 8px;border-radius:4px;font-size:12px">Completed</span></td></tr>
 </table>
 <div class="a t" style="left:350px;top:415px;font-size:50px;line-height:60px;color:rgba(0,0,0,.08);font-weight:bold">مستقل</div>
 <div class="a t" style="left:350px;top:470px;font-size:28px;line-height:30px;color:rgba(0,0,0,.08)">mostaql.com</div>
</div>
</body></html>
